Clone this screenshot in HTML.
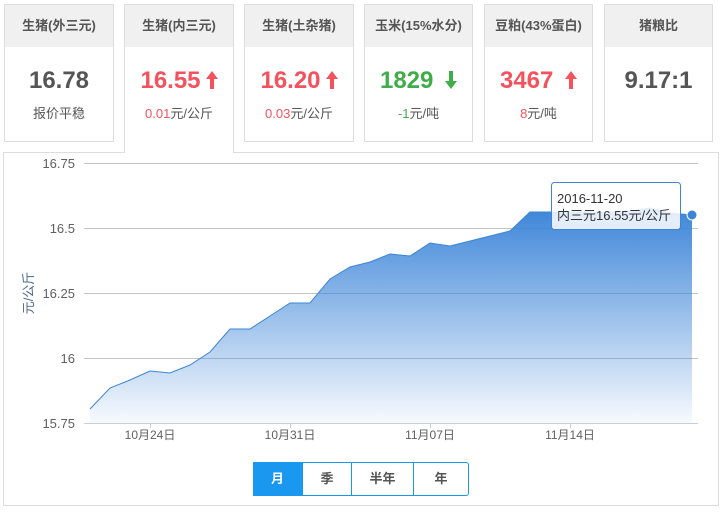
<!DOCTYPE html>
<html><head><meta charset="utf-8"><style>
*{margin:0;padding:0;box-sizing:border-box}
body{width:728px;height:512px;background:#fff;font-family:"Liberation Sans","Noto Sans CJK SC",sans-serif;position:relative;overflow:hidden}
.card{position:absolute;top:4px;width:110px;height:138px;border:1px solid #ddd;background:#fff;text-align:center}
.card .h{height:42px;background:#f0f0f0;line-height:42px;font-size:13px;font-weight:bold;color:#555}
.card .v{margin-top:20px;font-size:24px;font-weight:bold;color:#555;line-height:28px}
.card .s{margin-top:8px;font-size:13px;color:#555}
.red{color:#f4525d!important}.green{color:#3fae49!important}
.arr{display:inline-block;margin-left:5px;vertical-align:-1px}
.active{height:149px;border-bottom:none;z-index:2}
.panel{position:absolute;left:3px;top:152px;width:716px;height:354px;border:1px solid #ddd}
.btns{position:absolute;left:253px;top:462px;height:34px;width:216px;border:1px solid #1a98f0;border-radius:0 3px 3px 0;display:flex;font-size:13px;font-weight:bold;color:#555}
.btns div{line-height:32px;text-align:center;border-right:1px solid #1a98f0}
.btns div:last-child{border-right:none}
</style></head><body>
<div class="panel"></div>
<div class="card" style="left:4px"><div class="h">生猪(外三元)</div><div class="v">16.78</div><div class="s">报价平稳</div></div>
<div class="card active" style="left:124px"><div class="h">生猪(内三元)</div><div class="v red">16.55<svg class="arr" width="12" height="18" viewBox="0 0 12 18"><path d="M6,0 L12,8 L8,8 L8,18 L4,18 L4,8 L0,8 Z" fill="#f4525d"/></svg></div><div class="s"><span class="red">0.01</span>元/公斤</div></div>
<div class="card" style="left:244px"><div class="h">生猪(土杂猪)</div><div class="v red">16.20<svg class="arr" width="12" height="18" viewBox="0 0 12 18"><path d="M6,0 L12,8 L8,8 L8,18 L4,18 L4,8 L0,8 Z" fill="#f4525d"/></svg></div><div class="s"><span class="red">0.03</span>元/公斤</div></div>
<div class="card" style="left:364px;width:109px"><div class="h">玉米(15%水分)</div><div class="v green">1829 <svg class="arr" width="12" height="18" viewBox="0 0 12 18"><path d="M6,18 L12,10 L8,10 L8,0 L4,0 L4,10 L0,10 Z" fill="#3fae49"/></svg></div><div class="s"><span class="green">-1</span>元/吨</div></div>
<div class="card" style="left:484px;width:109px"><div class="h">豆粕(43%蛋白)</div><div class="v red">3467 <svg class="arr" width="12" height="18" viewBox="0 0 12 18"><path d="M6,0 L12,8 L8,8 L8,18 L4,18 L4,8 L0,8 Z" fill="#f4525d"/></svg></div><div class="s"><span class="red">8</span>元/吨</div></div>
<div class="card" style="left:604px;width:109px"><div class="h">猪粮比</div><div class="v">9.17:1</div></div>
<svg style="position:absolute;left:0;top:0" width="728" height="512">
<defs><linearGradient id="g" x1="0" y1="0" x2="0" y2="1"><stop offset="0" stop-color="#3d85d8"/><stop offset="1" stop-color="#3d85d8" stop-opacity="0.04"/></linearGradient></defs>
<g stroke="#c4c4c4" stroke-width="1">
<line x1="84" y1="163.5" x2="698" y2="163.5"/><line x1="84" y1="228.5" x2="698" y2="228.5"/><line x1="84" y1="293.5" x2="698" y2="293.5"/><line x1="84" y1="358.5" x2="698" y2="358.5"/></g>
<path d="M90,409 L110,388 130,380 150,371 170,373 190,365 210,352 230,329 250,329 270,316 290,303 310,303 330,279 350,267 370,262 390,254 410,256 430,243 450,246 470,241 490,236 510,231 530,212 550,212 570,212 590,212 610,212 630,211 650,208 670,213 692,215 L692,423 L90,423 Z" fill="url(#g)"/>
<polyline points="90,409 110,388 130,380 150,371 170,373 190,365 210,352 230,329 250,329 270,316 290,303 310,303 330,279 350,267 370,262 390,254 410,256 430,243 450,246 470,241 490,236 510,231 530,212 550,212 570,212 590,212 610,212 630,211 650,208 670,213 692,215" fill="none" stroke="#3d85d8" stroke-width="1"/>
<line x1="84" y1="423.5" x2="698" y2="423.5" stroke="#c0d0e0"/>
<g stroke="#c0d0e0"><line x1="150.5" y1="423" x2="150.5" y2="428"/><line x1="290.5" y1="423" x2="290.5" y2="428"/><line x1="430.5" y1="423" x2="430.5" y2="428"/><line x1="570.5" y1="423" x2="570.5" y2="428"/></g>
<g font-size="13" fill="#606060" text-anchor="end" font-family="Liberation Sans,sans-serif">
<text x="75" y="168">16.75</text><text x="75" y="233">16.5</text><text x="75" y="298">16.25</text><text x="75" y="363">16</text><text x="75" y="428">15.75</text></g>
<g font-size="12" fill="#606060" text-anchor="middle" font-family="Liberation Sans,Noto Sans CJK SC,sans-serif">
<text x="150" y="439">10月24日</text><text x="290" y="439">10月31日</text><text x="430" y="439">11月07日</text><text x="570" y="439">11月14日</text></g>
<text transform="translate(33,293) rotate(-90)" text-anchor="middle" font-size="13" fill="#4d6a8a" font-family="Liberation Sans,Noto Sans CJK SC,sans-serif">元/公斤</text>
<circle cx="692" cy="215" r="5" fill="#3d85d8" stroke="#fff" stroke-width="1"/>
<rect x="551.5" y="182.5" width="129" height="47" rx="3" fill="#fff" fill-opacity="0.85" stroke="#3d85d8"/>
<g font-size="13" fill="#333" font-family="Liberation Sans,Noto Sans CJK SC,sans-serif"><text x="557" y="203">2016-11-20</text><text x="557" y="220">内三元16.55元/公斤</text></g>
</svg>
<div class="btns"><div style="width:50px;background:#1a98f0;color:#fff;margin:-1px 0 -1px -1px;line-height:34px">月</div><div style="width:49px">季</div><div style="width:62px">半年</div><div style="flex:1">年</div></div>
</body></html>
